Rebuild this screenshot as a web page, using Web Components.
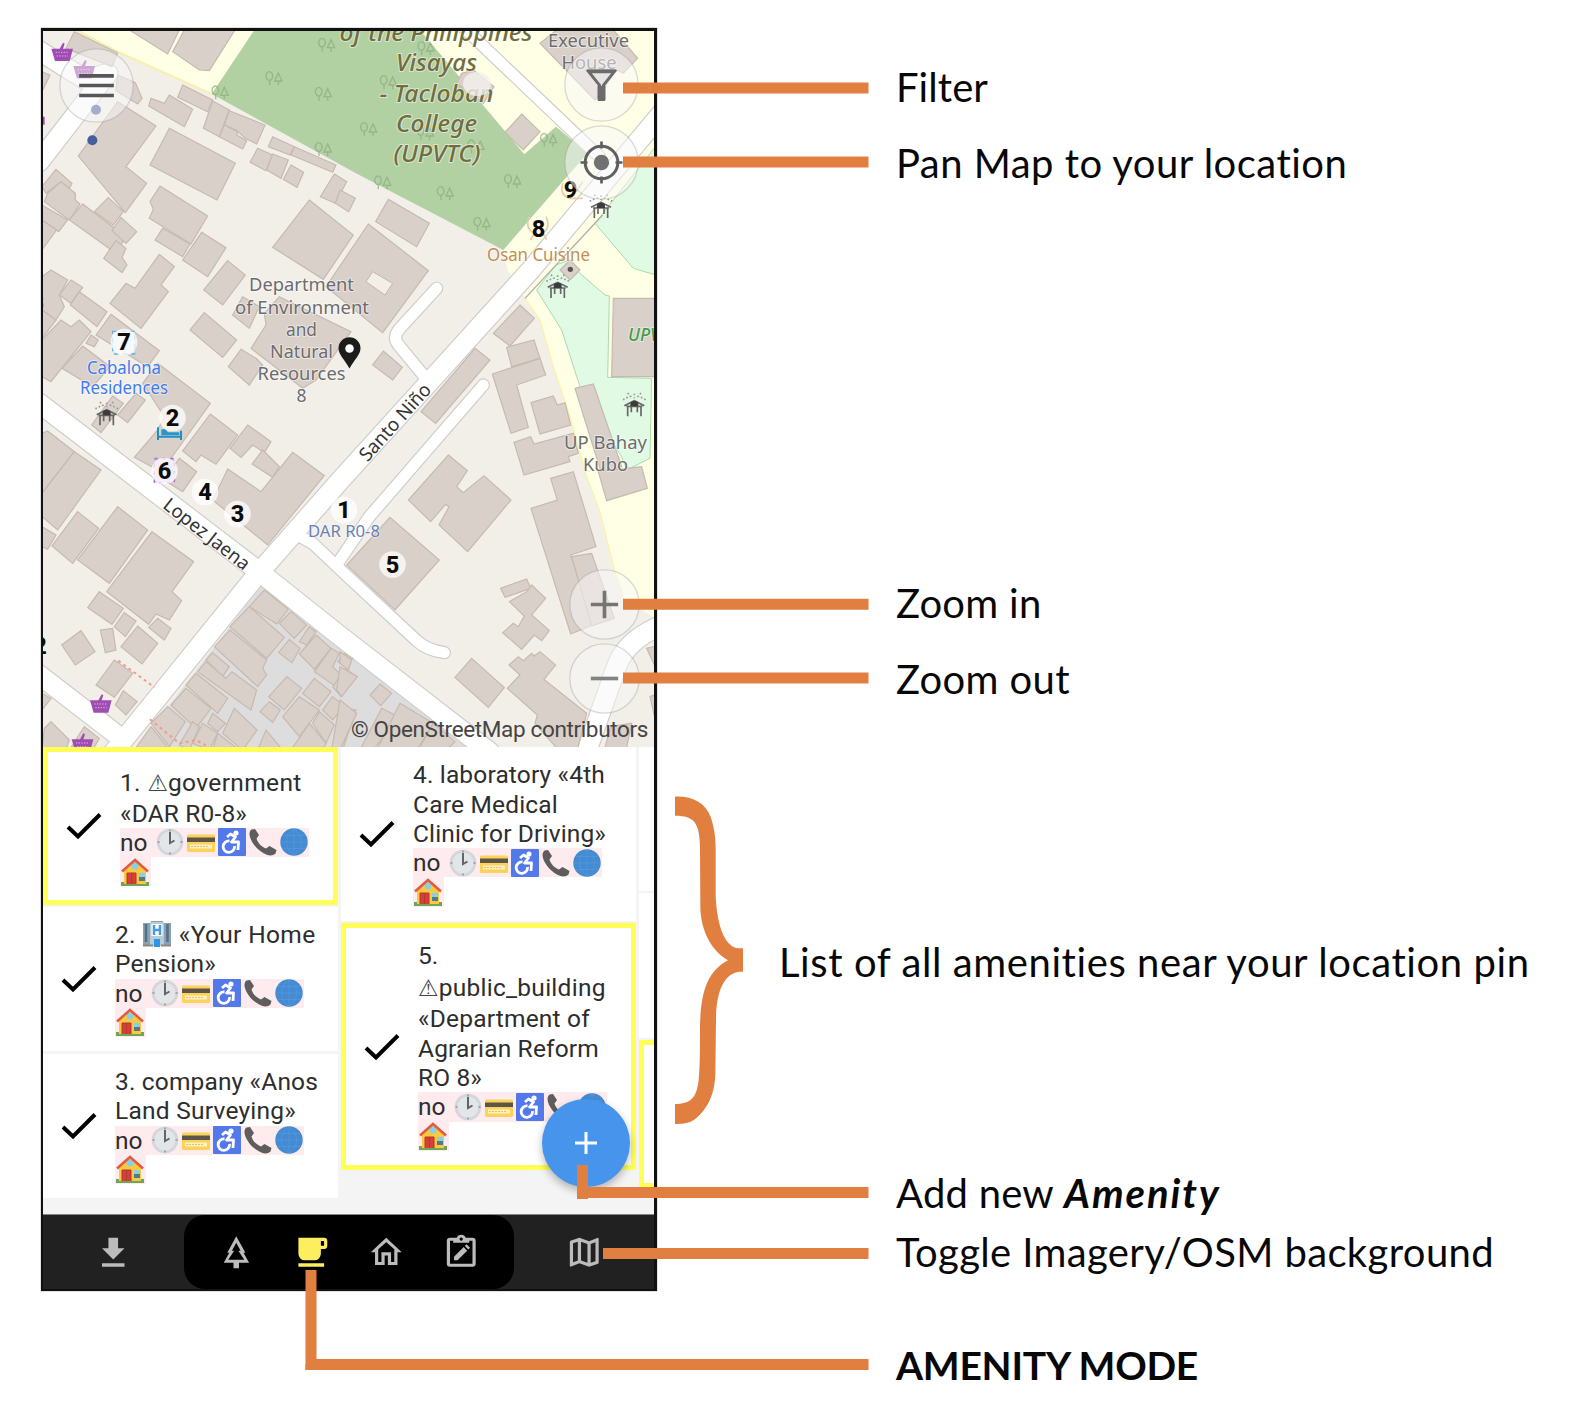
<!DOCTYPE html>
<html lang="en">
<head>
<meta charset="utf-8">
<title>Amenity mode guide</title>
<style>
html,body{margin:0;background:#fff}
body{width:1572px;height:1402px;overflow:hidden}
</style>
</head>
<body>
<guide-page></guide-page>
<script>
const define=(name,html,after)=>customElements.define(name,class extends HTMLElement{
  connectedCallback(){
    if(this.shadowRoot)return;
    const root=this.attachShadow({mode:'open'});
    root.innerHTML=typeof html==='function'?html(this):html;
    if(after)after(this,root);
  }
});

/* ---------- Map ---------- */
const P=(list,cls)=>list.map(p=>`<polygon${cls?` class="${cls}"`:''} points="${p}"/>`).join('');
const blocks=[
 [0,0,['115,35 245,98 228,140 90,85','245,165 298,188 318,235 305,252 240,212','280,30 430,30 395,102','445,30 597,30 520,152 490,150 410,95','18,155 42,165 18,215',
 '345,235 385,250 400,225 470,268 445,320 338,258','440,195 530,240 515,275 425,232','530,243 580,270 550,350 502,325','580,272 687,315 662,372 628,355 600,330 565,315','565,315 605,335 603,345 632,362 620,387 550,350',
 '245,245 360,318 270,440 332,490 268,578 127,408','400,325 598,430 543,540 342,435','710,350 775,380 762,405 697,380','775,380 900,435 890,457 765,405','665,385 710,405 690,452 642,427','710,402 757,420 735,475 692,450','765,435 803,457 783,502 742,478',
 '895,462 932,485 898,550 853,530','912,510 958,535 938,575 898,550','820,540 952,645 862,778 710,682','372,498 515,588 465,672 340,595 352,568 342,545','380,625 462,672 440,710 357,660','497,637 570,683 515,770 440,720',
 '60,448 108,490 100,505 75,485 30,520 18,500','75,485 118,520 118,540 132,552 100,600 25,545 35,520','18,555 95,600 68,635 18,600','18,600 62,630 18,690','140,552 270,650 240,700 100,600','217,533 262,575 232,615 175,575','255,592 302,635 270,670 228,632','240,662 270,685 258,712 273,735 258,758 203,715',
 '370,703 415,740 375,795 397,815 315,925 222,850 270,790 297,805','575,722 628,765 560,855 503,810']],
 [912,0,['145,538 268,610 230,680 107,605','85,612 265,752 128,938 -42,800','365,160 400,150 462,200 430,250 350,190','545,282 600,335 550,390 495,337','650,30 820,30 893,115 850,160 830,150 765,240 600,70','690,720 720,750 690,780 660,750']],
 [0,750,['45,0 95,30 70,75 85,110 60,150 18,120 18,20','105,30 140,52 105,100 70,75','130,65 213,125 183,170 103,105','18,120 60,150 18,205','75,150 105,170 130,150 165,185 45,335 18,320 18,210','165,195 187,210 175,230 150,220','225,133 370,242 335,290 180,195','140,228 222,290 170,350 78,295','505,128 602,210 560,262 462,180','615,238 660,265 680,285 640,345 577,290','620,80 670,110 640,175 590,135','730,80 945,185 840,330 800,355 645,235 690,165 685,130',
 '365,280 523,400 432,528 375,605 295,562 365,480 385,440 320,340','300,370 328,390 275,458 245,435','230,378 262,400 195,488 167,465','430,565 482,605 440,665 385,630','523,432 605,495 540,583 495,555 480,575 440,543','635,465 705,515 685,548 650,525 615,562 582,535','680,540 730,590 710,622 648,582','575,597 675,665 770,547 865,617 695,825 530,690','35,483 115,545 18,670 18,490','115,545 195,600 65,780 18,740 18,670']],
 [0,1470,['125,5 188,55 110,160 48,108','245,-10 335,60 220,220 125,150','18,50 60,75 35,118 18,110','348,65 473,155 408,245 437,272 400,330 360,312 338,343 212,245','190,245 262,295 228,343 155,293','265,308 300,333 268,380 235,350','365,325 405,355 385,390 338,352','305,348 365,400 318,462 255,410','193,360 230,355 240,420 208,428','135,362 177,425 118,465 77,405','235,450 290,490 235,562 180,525','262,542 303,575 270,615 238,585','45,635 100,690 90,720 18,720 25,655','145,650 190,685 170,720 100,720','18,550 45,565 18,600',
 '685,240 757,298 722,342 640,290','640,290 745,382 692,445 582,350','582,360 692,450 680,475 692,495 665,530 535,410','530,428 580,470 560,500 510,450','510,455 570,505 588,485 662,540 645,600 485,485','480,490 575,565 545,610 450,525','450,535 525,595 480,655 405,585','395,590 448,635 400,710 345,640','345,650 400,720 295,720','765,305 812,345 775,385 730,340','820,350 840,365 812,405 790,395','760,388 792,415 768,458 728,428','840,375 885,415 835,478 790,432','885,415 910,430 890,470 920,500 900,530 835,485','925,430 950,445 930,470 905,455','930,475 960,500 915,560 890,530','753,500 797,535 745,600 698,560','700,575 733,600 710,637 672,605','835,505 885,545 850,590 800,550','790,560 850,600 790,680 740,620','890,560 925,590 890,630 860,600','850,605 895,645 870,700 830,640','925,595 960,600 920,720 890,720','595,595 663,660 620,720 560,670','530,610 568,640 545,665 515,640','500,640 545,670 520,720 470,700','470,635 490,650 460,720 430,705','690,660 740,720 665,720','820,640 870,700 860,720 765,720','545,670 610,720 530,720']],
 [912,1470,['0,425 35,450 25,480 0,460','0,470 52,500 5,560 -10,540','120,522 155,550 122,587 90,555','0,570 50,610 0,720 -25,720','125,595 175,620 100,720 60,720','180,580 280,640 230,720 110,720','280,640 345,695 320,720 235,720','150,22 298,150 165,300 20,165','482,235 560,207 572,235 495,262','575,225 617,265 575,315 628,362 605,392 583,375 545,418 488,368 520,340 535,350 553,318 508,275 560,245','395,445 493,533 445,592 345,502','507,465 535,440 550,452 575,430 582,438 600,425 647,465 612,508 740,610 712,720 655,720 585,640 592,615 502,535 540,495','920,415 950,408 950,480','930,560 950,552 950,650','812,650 875,640 858,720 793,720']],
 [912,750,['130,243 187,292 158,330 98,285','405,235 450,270 287,460 243,425','540,105 583,145 510,228 460,190','500,232 582,210 600,265 515,290','457,312 600,265 617,315 530,345 565,472 513,490','573,398 640,378 652,405 675,398 692,465 600,492','522,517 572,500 582,522 700,490 715,550 685,560 690,575 552,615','705,355 760,342 845,590 785,612','775,605 905,590 922,655 800,692','820,85 950,85 950,320 815,320','325,555 382,602 350,650 370,668 432,617 513,690 383,845 297,765 327,710 317,703 272,755 205,690','632,625 700,605 768,830 692,855 735,985 758,1065 692,1092 573,715 652,690','695,860 755,850 823,1045 755,1068']]
];
const roads=['M-10 80L150 180L215 160','M10 425L215 160','M1900 252L1484 750L912 1382L650 1680L230 2200','M10 1150L650 1640L912 1848L1360 2195','M10 1965L250 2150','M1650 2200L1738 1950Q1765 1860 1880 1815'];
const service=['M1202 805L1092 925Q1070 950 1085 972L1170 1075','M1342 1095L1000 1490L905 1630','M775 1540L830 1570L920 1655L1140 1860Q1170 1890 1225 1898','M1280 20L1690 410'];
const trees=[[872,75],[714,175],[862,222],[862,388],[552,218],[1057,187],[998,328],[1168,340],[1040,488],[1228,520],[1430,484],[1338,612],[1538,360],[1170,85],[1320,380]];
const tree=([x,y])=>`<path d="M${x-14} ${y-20}a10 13 0 1 0 .1 0M${x-13} ${y+6}v14M${x+13} ${y-16}l-11 24h22zM${x+13} ${y+8}v12"/>`;
const basket=(x,y,o=1)=>`<g transform="translate(${x} ${y})" opacity="${o}"><path fill="#a04db3" d="M-33-14H-8L2-32L7-29L2-14H32L22 23H-22Z"/><path stroke="#ddb7e5" stroke-width="3" stroke-dasharray="4 4" fill="none" d="M-20-3H20M-17 8H17"/></g>`;
const hut=(x,y)=>`<g transform="translate(${x} ${y})" fill="none" stroke="#666" stroke-width="5"><path d="M-30 2L0-13L30 2M-24 4H24M-20 4V34M20 4V34M-9 6V22M9 6V22"/><path fill="#3c3c3c" stroke="none" d="M-12-3a12 9 0 0 1 24 0v7h-24z"/><path stroke="#999" stroke-dasharray="5 6" d="M-34-16L-14-26M34-16L14-26M-20-36L-8-22M20-36L8-22M0-34V-20"/></g>`;
const T=(x,y,s,size,len,extra='')=>`<text x="${x}" y="${y}" font-size="${size}" textLength="${len}" lengthAdjust="spacingAndGlyphs" ${extra}>${s}</text>`;
const num=(n,x,y)=>`<circle cx="${x}" cy="${y}" r="13.3" fill="#fff" fill-opacity=".72"/><text class="n" x="${x}" y="${y+8.3}">${n}</text>`;

const mapIcons={
menu:'<path d="M-52-29H52M-52 0H52M-52 30H52" stroke="#565656" stroke-width="11"/>',
filter:'<path d="M-44-42H44" stroke="#6b6b6b" stroke-width="7"/><path d="M-38-38L-6 2V45H6V2L38-38Z" stroke="#6b6b6b" stroke-width="9" fill="none"/><path fill="#6b6b6b" d="M-12 4H12V47H-12Z"/>',
locate:'<circle r="49" stroke="#5f5f5f" stroke-width="9" fill="none"/><circle r="23" fill="#717171"/><path d="M0-63V-42M0 42V63M-63 0H-42M42 0H63" stroke="#5f5f5f" stroke-width="8"/>',
plus:'<path d="M-41 0H41M0-41V41" stroke="#757575" stroke-width="11"/>',
minus:'<path d="M-41 0H41" stroke="#828282" stroke-width="11"/>'};

/* ---------- Icons of the list and the bottom bar ---------- */
const emoji={
clock:'<circle cx="14" cy="14" r="13.3" fill="#d3d7da"/><circle cx="14" cy="14" r="10.5" fill="#e3e6e8"/><path d="M14 4V15L18.5 12.5" stroke="#5c666b" stroke-width="2" fill="none"/><path d="M14 1.5v2M14 24.5v2M1.5 14h2M24.5 14h2" stroke="#8d9599" stroke-width="1.5"/>',
card:'<rect y="6.5" width="28" height="17.5" rx="1.5" fill="#fbd25a"/><path fill="#5d5547" d="M0 9.5h28v4.500H0z"/><path fill="#fff0bd" d="M3 16.5h22v4H3z"/><path d="M4 18.5h17" stroke="#d8c184" stroke-dasharray="2 1"/>',
chair:'<rect width="28" height="28" rx="1" fill="#5378ea"/><circle cx="18" cy="5" r="2.6" fill="#fff"/><path d="M9 9l3.500-3 5 3-4 5h7l-.5 8M16.500 18a5.700 5.700 0 1 1-5-5" fill="none" stroke="#fff" stroke-width="2.8" stroke-linejoin="round"/>',
phone:'<path d="M2.500 1.500L6 1l4 6-2.500 3.500c1 4 5 8.500 9.500 10l3.500-2.500 7 4-1 3.500c-2 2-5 2.500-8 1.500C10 24 3 16 1 9 0 6 .5 3 2.500 1.500Z" fill="#5e5c5c"/>',
globe:'<circle cx="14" cy="14" r="13.7" fill="#438bd2"/><path d="M14 1v26M1 14h26M3 7.500h22M3 20.500h22M14 1C4 8 4 20 14 27M14 1c10 7 10 19 0 26" stroke="#5797d8" stroke-width=".8" fill="none"/>',
house:'<path fill="#70a653" d="M0 24h28v4H0z"/><path fill="#fbc93f" d="M3 12L14 3l11 9v14H3Z"/><path fill="#d33f39" d="M6 15h9v11H6z"/><path d="M6 26V15h9v11M10.500 15v11" fill="none" stroke="#b7362f"/><path fill="#8ad0e5" d="M18 15h6v8h-6z"/><path fill="#537989" d="M18 19h6v4h-6z"/><circle cx="14" cy="8" r="3.5" fill="#8ad0e5"/><path d="M1 13.500L14 2l13 11.500" stroke="#e25a42" stroke-width="2.5" fill="none"/>',
hotel:'<path fill="#8ba0b0" d="M0 3h8V1h12v2h8v23H0z"/><path fill="#b9cbd6" d="M7 2h14v24H7z"/><path d="M3 4v18M24.500 4v18" stroke="#527186" stroke-width="2.5"/><path fill="#fff" d="M8.500 4h11v12h-11z"/><path d="M11 5v10M17 5v10M11 10h6" stroke="#449ce8" stroke-width="2.5"/><path fill="#2b97e8" d="M11 19h6v8h-6z"/><path fill="#8b8982" d="M0 24.500h10v2H0zM18 24.500h10v2H18z"/>'};
define('emoji-glyph',el=>`<style>:host{display:inline-flex;width:30.900px;justify-content:center;vertical-align:top;height:29.300px;align-items:center}</style><svg width="28" height="28" viewBox="0 0 28 28">${emoji[el.getAttribute('name')]}</svg>`);

/* A single line of text, tracked so that it fills the width given in "w". */
define('fit-line',`<style>:host{display:block;white-space:nowrap}span{display:inline-block}</style><span><slot></slot></span>`,(el,root)=>{
  const span=root.querySelector('span'),w=parseFloat(el.getAttribute('w'));
  if(!w)return;
  const n=el.textContent.length;
  span.style.letterSpacing=((w-span.getBoundingClientRect().width)/n).toFixed(3)+'px';
});

define('map-button',el=>`<style>:host{display:block;width:75px;height:75px}svg{display:block}</style>
<svg width="75" height="75" viewBox="-112.5 -112.5 225 225"><circle r="${el.hasAttribute('small')?104:110}" fill="#f8f8f8" fill-opacity=".52" stroke="#999" stroke-opacity=".35" stroke-width="4"/>${mapIcons[el.getAttribute('icon')]}</svg>`);

define('osm-map',()=>`<style>
:host{display:block;position:relative;width:611px;height:716px;overflow:hidden;background:#f2efe9}
svg{display:block}
.b polygon{fill:#d9d0c9;stroke:#c6b9af;stroke-width:3.500px}
text{font-family:"Noto Sans",sans-serif;text-anchor:middle;paint-order:stroke;stroke:#fff;stroke-opacity:.5;stroke-width:2px;stroke-linejoin:round}
.n{font:800 23.500px Roboto,sans-serif;fill:#0c0c0c;stroke:none}
.i{font-style:italic;font-weight:500;fill:#716d3d}
.g{fill:#6c6c6c}
fit-line{position:absolute;right:6px;bottom:4px;font:22.500px/28px Roboto,sans-serif;color:#444;width:297px}
map-button{position:absolute}
</style>
<svg width="611" height="716" viewBox="43 31 611 716">
<g transform="translate(36 20) scale(.333333)">
<polygon fill="#ffffe5" points="120,30 250,100 527,222 660,30"/>
<path fill="none" stroke="#f6f0b4" stroke-width="7" d="M125 32L250 98L527 222"/>
<polygon fill="#ffffe5" points="1152,30 1465,403 1560,320 1655,400 1402,690 1415,750 1467,835 1512,900 1552,1040 1602,1190 1652,1370 1690,1470 1735,1650 1765,1740 1870,1800 1870,30"/>
<path fill="none" stroke="#faf3a8" stroke-width="4" d="M1467 835L1512 900L1552 1040L1602 1190L1652 1370L1690 1470L1735 1650L1765 1740"/>
<polygon fill="#b2d1a3" points="655,30 527,222 960,460 1402,690 1575,490 1655,400 1560,320 1465,403 1152,30"/>
<g fill="#e1fae4" stroke="#a8dcab" stroke-width="3"><polygon points="1870,365 1677,610 1792,745 1870,768"/><polygon points="1560,735 1502,810 1577,930 1632,1100 1712,1240 1757,1310 1772,1350 1842,1315 1847,1075 1715,1072 1720,828 1707,825 1632,760 1600,720"/></g>
<polygon fill="#dddddd" points="675,1698 290,2200 1330,2200"/>
<g fill="none" stroke="#8dac80" stroke-width="4" opacity=".75">${trees.map(tree).join('')}</g>
<path d="M1467 835L1700 585" stroke="#b3aea7" stroke-width="4"/>
<g fill="none" stroke-linejoin="round" stroke-linecap="round">
<g stroke="#cfcdca" stroke-width="64">${roads.map(d=>`<path d="${d}"/>`).join('')}</g>
<g stroke="#cfcdca" stroke-width="40">${service.map(d=>`<path d="${d}"/>`).join('')}</g>
<g stroke="#fff" stroke-width="57">${roads.map(d=>`<path d="${d}"/>`).join('')}</g>
<g stroke="#fff" stroke-width="33">${service.map(d=>`<path d="${d}"/>`).join('')}</g></g>
<g class="b">${blocks.map(([x,y,l])=>`<g transform="translate(${x} ${y})">${P(l)}</g>`).join('')}</g>
<polygon fill="#f2efe9" stroke="#c4b6ab" stroke-width="3" points="1010,755 1070,790 1047,825 990,785"/>
<g fill="none" stroke="#f29a90" stroke-width="6" stroke-dasharray="9 10"><path d="M247 1922L355 2002M342 2098L430 2170L480 2160L515 2180"/></g>
<circle cx="169" cy="361" r="15" fill="#475e9e"/><circle cx="180" cy="269" r="15" fill="#475e9e"/>
<circle cx="1603" cy="748" r="8" fill="#555"/>
<path fill="#a04db3" d="M18 290h8v24h-8z"/>
${basket(79,100)}${basket(145,152)}${basket(195,2055)}${basket(140,2172)}
${hut(212,1182)}${hut(1565,800)}${hut(1695,560)}${hut(1795,1155)}
<g fill="none" stroke="#1f8fc4" stroke-width="6"><path d="M366 1222v38M435 1232v28M366 1250h70"/></g><path fill="#2697cc" d="M376 1228h12l8 9h34v9h-54z"/>
<path fill="#dcc3e6" stroke="#ac73bd" stroke-width="5" stroke-dasharray="10 14" d="M355 1316h60v72h-60z"/>
<path fill="#d9edf5" stroke="#62b3dc" stroke-width="4" stroke-dasharray="14 12" d="M230 934h66v68h-66z"/>
<g fill="none" stroke="#efc9a5" stroke-width="5"><path d="M1480 590q-15 35 15 50l-12 20M1530 590q15 35-10 48l12 22M1580 490q-10 40 25 45h35M1640 485l-20 30"/></g>
</g>
${T(436,41,'of the Philippines',23,193,'class="i"')}${T(436.5,71,'Visayas',23,81,'class="i"')}${T(436.5,101.5,'- Tacloban',23,114,'class="i"')}${T(436.5,131.5,'College',23,81,'class="i"')}${T(437,162,'(UPVTC)',23,87,'class="i"')}
<ellipse cx="477" cy="84" rx="14" ry="12" fill="#f4f0ee" fill-opacity=".8"/>
${T(588.5,46.7,'Executive',18.5,81,'class="g"')}${T(589,68.5,'House',18.5,55,'class="g"')}
${T(538.5,260.6,'Osan Cuisine',18.2,103,'fill="#c18f51"')}
${T(301.5,291.3,'Department',18.5,105,'class="g"')}${T(302,313.6,'of Environment',18.5,134,'class="g"')}${T(301.5,335.6,'and',18.5,31,'class="g"')}${T(301.5,357.8,'Natural',18.5,63,'class="g"')}${T(301.5,379.8,'Resources',18.5,88,'class="g"')}${T(301.5,402,'8',18.5,10,'class="g"')}
${T(124,374,'Cabalona',18,74,'fill="#3f7bf0"')}${T(124,394,'Residences',18,88,'fill="#3f7bf0"')}
${T(605.5,448.7,'UP Bahay',18.5,83,'class="g"')}${T(605.5,470.7,'Kubo',18.5,45,'class="g"')}
<text x="628" y="340.5" font-size="17.5" font-style="italic" font-weight="500" fill="#419c48" style="text-anchor:start">UPVTC</text>
${T(344,537,'DAR R0-8',16.5,72,'fill="#6880b6"')}
<g transform="translate(395.5 422.5) rotate(-48)">${T(0,6,'Santo Niño',19,97,'fill="#333"')}</g>
<g transform="translate(206.5 534.5) rotate(38)">${T(0,6,'Lopez Jaena',19,104,'fill="#333"')}</g>
${num(7,124,342)}${num(2,172.5,418)}${num(6,164.5,471)}${num(4,205,492)}${num(3,237.5,514)}${num(1,344,510)}${num(5,392.5,564.5)}<text class="n" x="538.5" y="237">8</text><text class="n" x="570.5" y="198">9</text>
<text class="n" x="39" y="309" style="font-size:18px;fill:#777">8</text><text class="n" x="40" y="654">2</text>
<path fill="#1c1c1c" d="M349.5 368.5C345 360 338.5 355 338.5 348.3a11 11 0 0 1 22 0C360.5 355 354 360 349.5 368.5Z"/><circle cx="349.5" cy="348.5" r="4.3" fill="#fff"/>
</svg>
<map-button style="left:15.500px;top:16.500px" icon="menu"></map-button>
<map-button style="left:521px;top:16px" icon="filter"></map-button>
<map-button style="left:521px;top:94px" icon="locate"></map-button>
<map-button style="left:523.500px;top:535.500px" icon="plus" small></map-button>
<map-button style="left:523.500px;top:610px" icon="minus" small></map-button>
<fit-line w="297">© OpenStreetMap contributors</fit-line>`);

/* ---------- Amenity list ---------- */
define('missing-tags',`<style>:host{display:block}.a,.b{display:flex;width:max-content;background:#fdebed;height:29.330px}.a span{width:34.500px}</style>
<div class="a"><span>no</span>${['clock','card','chair','phone','globe'].map(n=>`<emoji-glyph name="${n}"></emoji-glyph>`).join('')}</div><div class="b"><emoji-glyph name="house"></emoji-glyph></div>`);
define('amenity-card',`<style>
:host{box-sizing:border-box;display:flex;align-items:center;background:#fff;flex:none;font:24.500px/29.330px Roboto,"DejaVu Sans",sans-serif;color:#2d2d2d;overflow:hidden}
:host([near]){border:5px solid #ffff55}
.c{flex:none;width:72px;display:flex;justify-content:center}
.t{flex:1;min-width:0;white-space:nowrap;margin-top:-1px}
</style><div class="c"><svg width="36" height="28" viewBox="0 0 36 28"><path d="M2 15L12 24.500L34 2.500" fill="none" stroke="#000" stroke-width="4"/></svg></div><div class="t"><slot></slot><missing-tags></missing-tags></div>`);
define('amenity-list',`<style>
:host{display:flex;width:611px;height:467px;background:#f4f4f4;gap:3px;overflow:hidden;box-sizing:border-box}
section{display:flex;flex-direction:column;flex:none;width:295px}
section:first-child{width:296px;margin-right:1px}
.two,.one{gap:2px}
.warn{height:34px;line-height:35px}.warn i{font:normal 23px/1 "DejaVu Sans",sans-serif;letter-spacing:0;color:#444}
.sp{letter-spacing:.35px}.sp emoji-glyph{margin:0 1px}
.blank{background:#fff;flex:none}.y{background:#fff;box-sizing:border-box;border:5px solid #ffff55}
emoji-glyph{width:28px}
</style>
<section class="one">
<amenity-card near style="height:158px"><fit-line class="warn" w="182">1. <i>⚠</i>government</fit-line><fit-line w="127">«DAR R0-8»</fit-line></amenity-card>
<amenity-card style="height:144px"><div class="sp">2. <emoji-glyph name="hotel"></emoji-glyph> «Your Home</div><fit-line w="101">Pension»</fit-line></amenity-card>
<amenity-card style="height:144px;margin-top:1px"><fit-line w="203">3. company «Anos</fit-line><fit-line w="181">Land Surveying»</fit-line></amenity-card>
</section>
<section class="two">
<amenity-card style="height:174px"><fit-line w="192">4. laboratory «4th</fit-line><fit-line w="145">Care Medical</fit-line><fit-line w="193">Clinic for Driving»</fit-line></amenity-card>
<amenity-card near style="height:247px"><fit-line>5.</fit-line><fit-line class="warn" w="188"><i>⚠</i>public_building</fit-line><fit-line w="172">«Department of</fit-line><fit-line w="181">Agrarian Reform</fit-line><fit-line w="64">RO 8»</fit-line></amenity-card>
</section>
<section class="two"><div class="blank" style="height:144px"></div><div class="blank" style="height:145px"></div><div class="y" style="height:148px"></div></section>`);

/* ---------- Bottom bar ---------- */
const nav={
download:'<path d="M5 21H19V18.8H5M19 9.5H15V3H9V9.5H5L12 16.5Z"/>',
tree:'<path d="M12 2L6.4 12.3H7.7L4.2 18.5H10.3V22H13.7V18.5H20L16.5 12.3H17.7ZM12 6L14.7 11H13.3L17 16.7H7L10.7 11H9.3Z"/>',
cup:'<path d="M4 21H20V18.9H4ZM20 3H4V13A4 4 0 0 0 8 17H14A4 4 0 0 0 18 13V10H20A2 2 0 0 0 22 8V5A2 2 0 0 0 20 3M20 8H18V5H20Z"/>',
home:'<path d="M12 5.69L17 10.19V18H15V12H9V18H7V10.19L12 5.69M12 3L2.3 12H5V20H11V14H13V20H19V12H21.7"/>',
edit:'<path fill-rule="evenodd" d="M19 3H14.800A3 3 0 0 0 9.200 3H5A2 2 0 0 0 3 5V19A2 2 0 0 0 5 21H19A2 2 0 0 0 21 19V5A2 2 0 0 0 19 3M12 2.800A1 1 0 1 1 11.900 2.800M5 4.800H7V6H17V4.800H19V19.200H5Z"/><path d="M7.500 17V14.800L13.500 8.800L15.700 11L9.700 17ZM14.200 8.100L15.300 7L17.500 9.200L16.400 10.300Z"/>',
map:'<path fill-rule="evenodd" d="M20.5 3L15 5.1L9 3L3.36 4.9L3 5.38V20.5L3.5 21L9 18.9L15 21L20.64 19.1L21 18.62V3.5ZM10 5.47L14 6.87V18.53L10 17.13ZM5 6.46L8 5.45V17.15L5 18.31ZM19 17.54L16 18.55V6.86L19 5.7Z"/>'};
define('nav-icon',el=>`<style>:host{display:flex;justify-content:center;align-items:center;color:#bcbcbc}:host([on]){color:#fcee5e}</style><svg width="38.5" height="38.5" viewBox="0 0 24 24" fill="currentColor">${nav[el.getAttribute('name')]}</svg>`);
define('nav-bar',`<style>:host{display:flex;height:75px;width:611px;background:#212121;border-top:1px solid #858585;box-sizing:border-box}
div{display:flex;width:330px;background:#000;border-radius:21px;padding:0 15px;box-sizing:border-box;flex:none}
div nav-icon{width:75px}.s{flex:1}</style>
<nav-icon class="s" name="download"></nav-icon><div><nav-icon name="tree"></nav-icon><nav-icon name="cup" on></nav-icon><nav-icon name="home"></nav-icon><nav-icon name="edit"></nav-icon></div><nav-icon class="s" name="map"></nav-icon>`);

define('fab-button',`<style>:host{display:flex;align-items:center;justify-content:center;width:88px;height:88px;border-radius:50%;background:#4694ec;box-shadow:0 4px 8px rgba(0,0,0,.28)}</style><svg width="24" height="24" viewBox="0 0 24 24"><path d="M1 12H23M12 1V23" stroke="#fff" stroke-width="3"/></svg>`);
define('phone-screen',`<style>:host{display:flex;flex-direction:column;position:relative;box-sizing:border-box;width:616px;height:1263px;border:solid #111;border-width:3px 3px 2px 2px;background:#212121;box-shadow:0 0 1px #555}
fab-button{position:absolute;left:499px;top:1068px}</style>
<osm-map></osm-map><amenity-list></amenity-list><nav-bar></nav-bar><fab-button></fab-button>`);

/* ---------- Callouts ---------- */
define('callout-lines',`<style>:host{position:absolute;left:0;top:0;pointer-events:none}svg{display:block}</style>
<svg width="900" height="1402"><g fill="none" stroke="#e17f41" stroke-width="11">
<path d="M623 88H868.5M623 162H868.5M623 604.3H868.5M623 678H868.5M603 1253.5H868.500"/><path d="M582.5 1165V1199M577 1192.500H868.500M311 1270V1364.500H868.500"/></g>
<path fill="#e17f41" d="M305.500 1364h11v6h-11z"/>
<g transform="translate(640 780) scale(.333333)"><path fill="#e17f41" d="M105 50C160 48 195 70 212 110C225 150 227 180 227 210L227 350C232 440 255 505 300 505L309 505V575L298 575C250 580 228 640 228 720L226 880C225 940 205 985 165 1018C145 1032 125 1032 105 1032V972C150 972 170 955 176 900C180 860 180 820 180 740C182 640 200 575 264 541C205 505 182 440 181 380L180 200C178 130 165 107 105 107Z"/></g></svg>`);
define('callout-labels',`<style>:host{display:flex;flex-direction:column;padding:62px 0 0 239px;font:40px/50px Lato,"Open Sans",sans-serif;color:#080808}
fit-line{flex:none;height:50px}.row{display:flex}.list{margin-left:-117px}b{font-weight:700}.mode{font-size:39px}</style>
<fit-line w="92">Filter</fit-line>
<fit-line w="452" style="margin-top:26px">Pan Map to your location</fit-line>
<fit-line w="145.5" style="margin-top:390px">Zoom in</fit-line>
<fit-line w="174" style="margin-top:26px">Zoom out</fit-line>
<fit-line w="752" class="list" style="margin-top:233px">List of all amenities near your location pin</fit-line>
<div class="row" style="margin-top:181px"><fit-line w="158" style="width:168px">Add new</fit-line><fit-line w="156.5"><b><i>Amenity</i></b></fit-line></div>
<fit-line w="598" style="margin-top:9px">Toggle Imagery/OSM background</fit-line>
<fit-line w="302" class="mode" style="margin-top:63px"><b>AMENITY MODE</b></fit-line>`);
define('guide-page',`<style>:host{display:flex;position:relative;width:1572px;height:1402px;background:#fff;overflow:hidden}
phone-screen{margin:28px 0 0 41px;flex:none}</style><phone-screen></phone-screen><callout-labels></callout-labels><callout-lines></callout-lines>`);
</script>
</body>
</html>
